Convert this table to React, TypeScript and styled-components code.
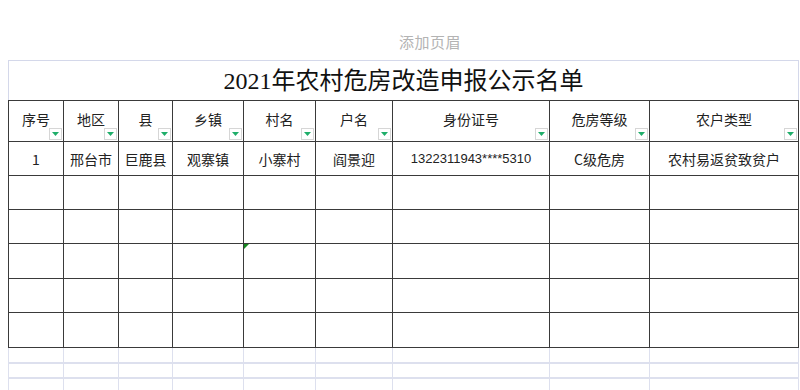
import React from 'react';
import styled, { createGlobalStyle } from 'styled-components';

const GlobalStyle = createGlobalStyle`
  html, body {
    margin: 0;
    padding: 0;
    background: #ffffff;
  }
  body {
    font-family: "Noto Sans CJK SC", "Noto Sans", sans-serif;
    overflow: hidden;
  }
`;

interface Column {
  title: string;
  width: number;
}

const columns: Column[] = [
  { title: '序号', width: 55 },
  { title: '地区', width: 55 },
  { title: '县', width: 54 },
  { title: '乡镇', width: 71 },
  { title: '村名', width: 72 },
  { title: '户名', width: 77 },
  { title: '身份证号', width: 157 },
  { title: '危房等级', width: 100 },
  { title: '农户类型', width: 149 }
];

const record = ['1', '邢台市', '巨鹿县', '观寨镇', '小寨村', '阎景迎', '1322311943****5310', 'C级危房', '农村易返贫致贫户'];

const rowHeights = [34, 34, 34, 35, 34, 35];

const FilterButton = () => (
  <Filter>
    <svg width='7' height='4' viewBox='0 0 7 4'>
      <path d='M0 0 H7 L3.5 4 Z' fill='#1fae6a' />
    </svg>
  </Filter>
);

const App = () => {
  return (
    <Page>
      <GlobalStyle />
      <HeaderArea>添加页眉</HeaderArea>
      <Sheet>
        <colgroup>
          {columns.map((c) => (
            <col key={c.title} style={{ width: c.width }} />
          ))}
        </colgroup>
        <tbody>
          <tr>
            <TitleCell colSpan={columns.length}>
              <Digits>2021</Digits>年农村危房改造申报公示名单
            </TitleCell>
          </tr>
          <HeadRow>
            {columns.map((c) => (
              <HeadCell key={c.title}>
                {c.title}
                <FilterButton />
              </HeadCell>
            ))}
          </HeadRow>
          {rowHeights.map((h, r) => (
            <tr key={r} style={{ height: h }}>
              {columns.map((c, i) => (
                <Cell key={c.title} $mono={i === 6}>
                  {r === 0 ? record[i] : ''}
                  {r === 3 && i === 4 && <Marker />}
                </Cell>
              ))}
            </tr>
          ))}
          {[0, 1, 2].map((r) => (
            <GridRow key={'g' + r}>
              {columns.map((c) => (
                <GridCell key={c.title} />
              ))}
            </GridRow>
          ))}
        </tbody>
      </Sheet>
    </Page>
  );
};

const Page = styled.div`
  width: 800px;
  height: 390px;
  overflow: hidden;
`;

const HeaderArea = styled.div`
  height: 60px;
  box-sizing: border-box;
  padding: 31px 0 0 60px;
  text-align: center;
  font-size: 15px;
  color: #b3b3b3;
  letter-spacing: 0.5px;
`;

const Sheet = styled.table`
  margin-left: 8px;
  width: 790px;
  table-layout: fixed;
  border-collapse: collapse;
  border-spacing: 0;
`;

const TitleCell = styled.td`
  height: 39px;
  padding: 0;
  text-align: center;
  font-family: "Liberation Serif", "Noto Sans CJK SC", serif;
  font-size: 24px;
  color: #111;
  border-top: 1px solid #d4d8ea;
  border-left: 1px solid #d4d8ea;
  border-right: 1px solid #d4d8ea;
  border-bottom: 1px solid #3a3a3a;
  line-height: 38px;
`;

const Digits = styled.span`
  font-family: "Liberation Serif", serif;
`;

const HeadRow = styled.tr`
  height: 41px;
`;

const HeadCell = styled.td`
  position: relative;
  padding: 0 0 4px;
  text-align: center;
  font-size: 14px;
  color: #222;
  border: 1px solid #3a3a3a;
`;

const Filter = styled.span`
  position: absolute;
  right: 1px;
  bottom: 1px;
  width: 11px;
  height: 10px;
  border: 1px solid #d6d6d6;
  background: #fff;
  display: flex;
  align-items: center;
  justify-content: center;
`;

const Cell = styled.td<{ $mono?: boolean }>`
  position: relative;
  padding: 0;
  text-align: center;
  font-family: ${(p) => (p.$mono ? '"Liberation Sans", sans-serif' : '"Noto Sans CJK SC", sans-serif')};
  font-size: ${(p) => (p.$mono ? '13px' : '14px')};
  color: #222;
  border: 1px solid #3a3a3a;
`;

const Marker = styled.span`
  position: absolute;
  left: 0;
  top: 0;
  width: 0;
  height: 0;
  border-top: 5px solid #14891f;
  border-right: 5px solid transparent;
`;

const GridRow = styled.tr`
  height: 15px;
`;

const GridCell = styled.td`
  padding: 0;
  border: 1px solid #dde0ee;
  border-bottom-width: 2px;
`;

export default App;
